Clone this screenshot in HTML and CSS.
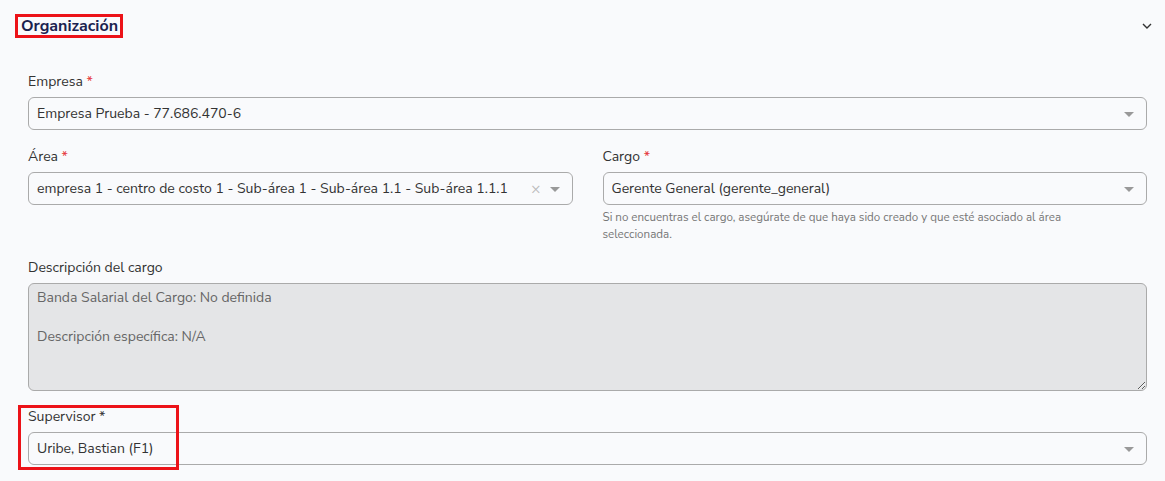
FILE: index.html
```html
<!DOCTYPE html>
<html lang="es">
<head>
    <meta charset="UTF-8">
    <meta name="viewport" content="width=device-width, initial-scale=1.0">
    <title>Organización</title>
    <link rel="stylesheet" href="styles.css">
</head>
<body>
    <section class="panel">
        <!-- Panel header -->
        <div class="panel-header">
            <h2 class="panel-title marked">Organización</h2>
            <svg class="chevron" width="12" height="8" viewBox="0 0 12 8">
                <path d="M2 2l4 4 4-4" fill="none" stroke="#333" stroke-width="1.4"/>
            </svg>
        </div>

        <div class="panel-body">
            <!-- Empresa -->
            <div class="field">
                <label class="field-label">Empresa <span class="req">*</span></label>
                <div class="select">
                    <span class="select-value">Empresa Prueba - 77.686.470-6</span>
                    <span class="caret"></span>
                </div>
            </div>

            <!-- Área + Cargo -->
            <div class="row">
                <div class="field">
                    <label class="field-label">Área <span class="req">*</span></label>
                    <div class="select">
                        <span class="select-value">empresa 1 - centro de costo 1 - Sub-área 1 - Sub-área 1.1 - Sub-área 1.1.1</span>
                        <span class="clear">&times;</span>
                        <span class="caret"></span>
                    </div>
                </div>
                <div class="field">
                    <label class="field-label">Cargo <span class="req">*</span></label>
                    <div class="select">
                        <span class="select-value">Gerente General (gerente_general)</span>
                        <span class="caret"></span>
                    </div>
                    <p class="help">Si no encuentras el cargo, asegúrate de que haya sido creado y que esté asociado al área seleccionada.</p>
                </div>
            </div>

            <!-- Descripción -->
            <div class="field">
                <label class="field-label">Descripción del cargo</label>
                <textarea class="description" disabled>Banda Salarial del Cargo: No definida

Descripción específica: N/A</textarea>
            </div>

            <!-- Supervisor -->
            <div class="field supervisor">
                <span class="mark-box"></span>
                <label class="field-label">Supervisor *</label>
                <div class="select">
                    <span class="select-value">Uribe, Bastian (F1)</span>
                    <span class="caret"></span>
                </div>
            </div>
        </div>
    </section>
</body>
</html>
```

FILE: styles.css
```css
body {
    margin: 0;
    padding: 0;
    background: #f9fafc;
    font-family: "Nunito Sans", Lato, "Open Sans", sans-serif;
    color: #333;
    overflow: hidden;
}
.panel {
    padding: 14px 18px 0 28px;
}
.panel-header {
    display: flex;
    align-items: center;
    justify-content: space-between;
    margin-left: -13px;
}
.panel-title {
    margin: 0;
    font-size: 16px;
    font-weight: 700;
    color: #1b2250;
    line-height: 18px;
    padding: 0 2px 0 3px;
}
.marked {
    border: 3px solid #ec1218;
}
.chevron {
    display: block;
    margin-right: -6px;
}
.panel-body {
    padding-top: 35px;
}
.field {
    display: flex;
    flex-direction: column;
    margin-bottom: 18px;
    position: relative;
}
.field-label {
    font-size: 14px;
    line-height: 18px;
    margin-bottom: 6px;
    color: #333;
}
.req {
    color: #e5353b;
}
.select {
    height: 33px;
    box-sizing: border-box;
    border: 1px solid #aaa;
    border-radius: 6px;
    background: #f9fafc;
    display: flex;
    align-items: center;
    padding: 0 12px 0 8px;
    gap: 12px;
}
.select-value {
    flex: 1;
    font-size: 14px;
    color: #333;
    white-space: nowrap;
    overflow: hidden;
}
.caret {
    width: 0;
    height: 0;
    border-left: 5px solid transparent;
    border-right: 5px solid transparent;
    border-top: 5px solid #999;
    margin-top: 1px;
}
.clear {
    font-size: 16px;
    color: #bbb;
    line-height: 1;
    margin-right: -3px;
}
.row {
    display: grid;
    grid-template-columns: 1fr 1fr;
    gap: 30px;
}
.row .field {
    margin-bottom: 16px;
}
.help {
    margin: 4px 0 0;
    padding-right: 60px;
    font-size: 11.6px;
    line-height: 17px;
    color: #777;
}
.description {
    height: 108px;
    box-sizing: border-box;
    border: 1px solid #aaa;
    border-radius: 6px;
    background: #e4e5e7;
    font-family: inherit;
    font-size: 14px;
    line-height: 19.5px;
    color: #666;
    padding: 4px 8px;
    resize: vertical;
}
.supervisor {
    margin-top: -1px;
}
.mark-box {
    position: absolute;
    left: -10px;
    top: -3px;
    width: 161px;
    height: 65px;
    border: 3px solid #ec1218;
    box-sizing: border-box;
    pointer-events: none;
}
```
